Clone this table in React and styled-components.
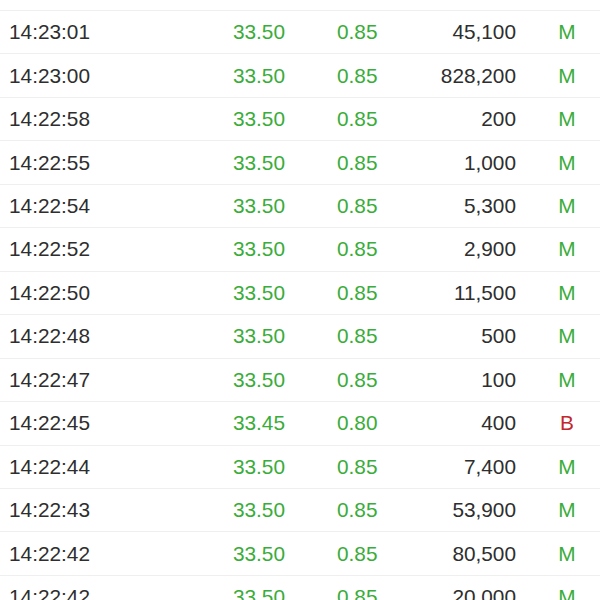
import styled, { createGlobalStyle } from "styled-components";

const trades = [
    ["14:23:01", "33.50", "0.85", "45,100", "M"],
    ["14:23:00", "33.50", "0.85", "828,200", "M"],
    ["14:22:58", "33.50", "0.85", "200", "M"],
    ["14:22:55", "33.50", "0.85", "1,000", "M"],
    ["14:22:54", "33.50", "0.85", "5,300", "M"],
    ["14:22:52", "33.50", "0.85", "2,900", "M"],
    ["14:22:50", "33.50", "0.85", "11,500", "M"],
    ["14:22:48", "33.50", "0.85", "500", "M"],
    ["14:22:47", "33.50", "0.85", "100", "M"],
    ["14:22:45", "33.45", "0.80", "400", "B"],
    ["14:22:44", "33.50", "0.85", "7,400", "M"],
    ["14:22:43", "33.50", "0.85", "53,900", "M"],
    ["14:22:42", "33.50", "0.85", "80,500", "M"],
    ["14:22:42", "33.50", "0.85", "20,000", "M"],
];

const GlobalStyle = createGlobalStyle`
    html, body {
        margin: 0;
        padding: 0;
        background: #fff;
        overflow: hidden;
    }
`;

const List = styled.div`
    width: 600px;
    height: 600px;
    overflow: hidden;
    padding-top: 10px;
    box-sizing: border-box;
    font-family: "Liberation Sans", Arial, sans-serif;
    font-size: 20.8px;
    color: #2e2e2e;
`;

const Row = styled.div`
    display: grid;
    grid-template-columns: 190px 86px 132px 99px 73px;
    align-items: center;
    height: 43.46px;
    box-sizing: border-box;
    padding-left: 9px;
    border-top: 1px solid #efefef;
`;

const Time = styled.span``;

const Price = styled.span`
    text-align: right;
    color: #3aac3a;
`;

const Change = styled.span`
    padding-left: 52px;
    color: #3aac3a;
`;

const Volume = styled.span`
    text-align: right;
`;

const Kind = styled.span`
    padding-left: 29px;
    text-align: center;
    color: ${(p) => (p.$kind === "B" ? "#c1272d" : "#3aac3a")};
`;

export default function App() {
    return (
        <>
            <GlobalStyle />
            <List>
                {trades.map(([time, price, change, vol, kind], i) => (
                    <Row key={i}>
                        <Time>{time}</Time>
                        <Price>{price}</Price>
                        <Change>{change}</Change>
                        <Volume>{vol}</Volume>
                        <Kind $kind={kind}>{kind}</Kind>
                    </Row>
                ))}
            </List>
        </>
    );
}
